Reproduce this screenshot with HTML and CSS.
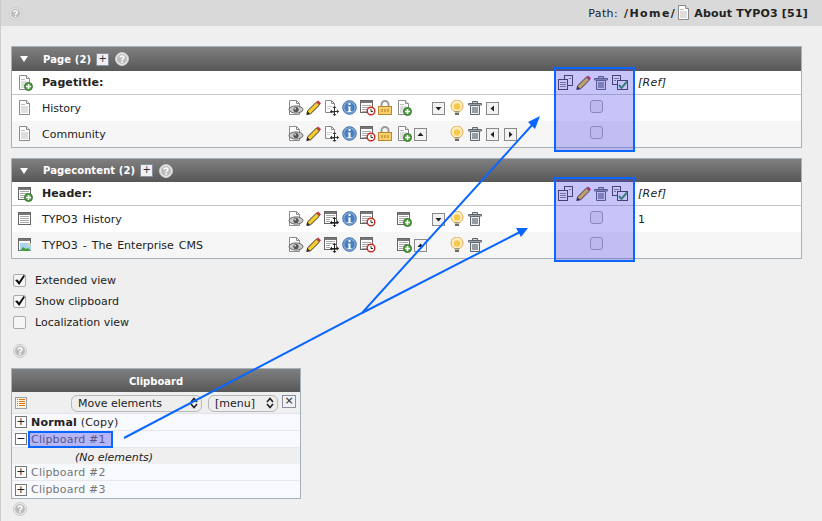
FILE: index.html
```html
<!DOCTYPE html>
<html lang="en">
<head>
    <meta charset="UTF-8">
    <meta name="viewport" content="width=device-width, initial-scale=1.0">
    <title>Web > List</title>
    <link rel="stylesheet" href="styles.css">
</head>
<body>
    <!-- icon sprites -->
    <svg class="sprites" aria-hidden="true">
        <symbol id="i-help" viewBox="0 0 14 14">
            <circle cx="7" cy="7" r="6.5" fill="#ececec" stroke="#c8c8c8"/>
            <circle cx="7" cy="7" r="5" fill="#bcbcbc"/>
            <path d="M5.2 5.6c0-2.3 3.7-2.3 3.7 0 0 1.3-1.9 1.3-1.9 2.8" fill="none" stroke="#fff" stroke-width="1.5"/>
            <rect x="6.2" y="9.2" width="1.6" height="1.6" fill="#fff"/>
        </symbol>
        <symbol id="i-doc" viewBox="0 0 16 16">
            <path d="M2.5 .5h7l3 3v11h-10z" fill="#fff" stroke="#8a8a8a"/>
            <path d="M9.5 .5v3h3" fill="#eee" stroke="#8a8a8a"/>
            <rect x="4" y="6" width="7" height="7" fill="#dedede"/>
            <path d="M4 4.5h4" stroke="#bbb"/>
        </symbol>
        <symbol id="i-plus" viewBox="0 0 16 16">
            <circle cx="11.5" cy="11.5" r="4" fill="#4c9a3e" stroke="#3a7d30"/>
            <path d="M11.5 9v5M9 11.5h5" stroke="#fff" stroke-width="1.6"/>
        </symbol>
        <symbol id="i-view" viewBox="0 0 16 16">
            <path d="M1.5 .5h7l3 3v11h-10z" fill="#fff" stroke="#8a8a8a"/>
            <path d="M8.5 .5v3h3" fill="none" stroke="#8a8a8a"/>
            <ellipse cx="8" cy="9.5" rx="7" ry="3.6" fill="#c9c9c9" stroke="#666"/>
            <circle cx="8" cy="9.5" r="2.6" fill="#555"/>
            <circle cx="7.2" cy="8.6" r=".9" fill="#ddd"/>
        </symbol>
        <symbol id="i-pencil" viewBox="0 0 16 16">
            <path d="M.8 14.5l.9-3.8L10.5 2l3 3-8.8 8.7z" fill="#f5cc2e" stroke="#222" stroke-width=".9"/>
            <path d="M10.5 2l1.7-1.6 2.8 2.8L13.5 5z" fill="#d0304a"/>
            <path d="M.8 14.5l.8-3 2.3 2.2z" fill="#222"/>
        </symbol>
        <symbol id="i-move" viewBox="0 0 16 16">
            <path d="M1.5 .5h6l3 3v9h-9z" fill="#fff" stroke="#8a8a8a"/>
            <path d="M7.5 .5v3h3" fill="none" stroke="#8a8a8a"/>
            <path d="M3 6.5h5M3 8.5h3" stroke="#ccc"/>
            <path d="M10.5 7v8M6.5 11.5h8" stroke="#333"/>
            <path d="M10.5 6l-2 2h4zM10.5 16l-2-2h4zM6 11.5l2-2v4zM15 11.5l-2-2v4z" fill="#333"/>
        </symbol>
        <symbol id="i-info" viewBox="0 0 16 16">
            <circle cx="7.5" cy="7.5" r="6.8" fill="#82a9d8" stroke="#3f6ea8"/>
            <circle cx="7.5" cy="7.5" r="5" fill="#4a7fbe"/>
            <rect x="6.5" y="3" width="2" height="2" fill="#fff"/>
            <path d="M6 6.5h2.5V11h1v1h-4v-1h1V7.5H6z" fill="#fff"/>
        </symbol>
        <symbol id="i-time" viewBox="0 0 16 16">
            <rect x=".5" y=".5" width="12" height="12" fill="#fff" stroke="#666"/>
            <rect x="1" y="1" width="11" height="2" fill="#777"/>
            <path d="M2 5.5h9M2 7.5h9M2 9.5h5M2 11.5h5" stroke="#aaa"/>
            <circle cx="11" cy="11" r="3.8" fill="#fff" stroke="#c8281e" stroke-width="1.4"/>
            <path d="M11 9v2.5h2" fill="none" stroke="#333"/>
        </symbol>
        <symbol id="i-lock" viewBox="0 0 16 16">
            <path d="M3.5 7V4.5a3.5 3.5 0 0 1 7 0V7" fill="none" stroke="#9a9a9a" stroke-width="2"/>
            <rect x=".5" y="6.5" width="13" height="8" fill="#f6d070" stroke="#b98a2c"/>
            <path d="M3 9h2v3H3zM6 9h2v3H6zM9 9h2v3H9z" fill="#d9a23f"/>
        </symbol>
        <symbol id="i-bulb" viewBox="0 0 16 16">
            <circle cx="7" cy="6" r="6" fill="#fdeec4" stroke="#e8a84a"/>
            <circle cx="7" cy="6.5" r="3.2" fill="#f8c848"/>
            <path d="M4.5 11h5v1.5h-5z" fill="#9a9a70"/>
            <path d="M5 13h4v2H5z" fill="#6a6a6a"/>
        </symbol>
        <symbol id="i-trash" viewBox="0 0 16 16">
            <path d="M.5 3.5h13V5H.5zM4.5 3.5v-2h5v2" fill="#d0d4d8" stroke="#5f6670"/>
            <path d="M2.5 5.5h9v9h-9z" fill="#eceef0" stroke="#5f6670"/>
            <path d="M5 7v6M7 7v6M9 7v6" stroke="#5f6670" stroke-width="1.2"/>
        </symbol>
        <symbol id="i-btn-down" viewBox="0 0 16 16">
            <rect x=".5" y="2.5" width="12" height="12" fill="#f2f2f2" stroke="#8a8a8a"/>
            <path d="M3.5 7h6l-3 3.5z" fill="#222"/>
        </symbol>
        <symbol id="i-btn-up" viewBox="0 0 16 16">
            <rect x=".5" y="2.5" width="12" height="12" fill="#f2f2f2" stroke="#8a8a8a"/>
            <path d="M3.5 10h6l-3-3.5z" fill="#222"/>
        </symbol>
        <symbol id="i-btn-left" viewBox="0 0 16 16">
            <rect x=".5" y="2.5" width="12" height="12" fill="#f2f2f2" stroke="#8a8a8a"/>
            <path d="M8 5.5v6l-3.5-3z" fill="#222"/>
        </symbol>
        <symbol id="i-btn-right" viewBox="0 0 16 16">
            <rect x=".5" y="2.5" width="12" height="12" fill="#f2f2f2" stroke="#8a8a8a"/>
            <path d="M5 5.5v6l3.5-3z" fill="#222"/>
        </symbol>
        <symbol id="i-table" viewBox="0 0 16 16">
            <rect x="1.5" y="1.5" width="12" height="12" fill="#fff" stroke="#666"/>
            <rect x="2" y="2" width="11" height="2" fill="#777"/>
            <path d="M3 5.5h9M3 7.5h9M3 9.5h9M3 11.5h9" stroke="#aaa"/>
        </symbol>
        <symbol id="i-table-move" viewBox="0 0 16 16">
            <rect x=".5" y=".5" width="12" height="12" fill="#fff" stroke="#666"/>
            <rect x="1" y="1" width="11" height="2" fill="#777"/>
            <path d="M2 4.5h9M2 6.5h9M2 8.5h4M2 10.5h4" stroke="#aaa"/>
            <path d="M10.5 7v8M6.5 11.5h8" stroke="#222"/>
            <path d="M10.5 6l-2 2h4zM10.5 16l-2-2h4zM6 11.5l2-2v4zM15 11.5l-2-2v4z" fill="#222"/>
        </symbol>
        <symbol id="i-image" viewBox="0 0 16 16">
            <rect x="1.5" y="1.5" width="12" height="12" fill="#fff" stroke="#666"/>
            <rect x="2" y="2" width="11" height="2" fill="#777"/>
            <rect x="3" y="6" width="11" height="8" fill="#a8d4ef"/>
            <path d="M3 14l3-4 3 2 2-1 3 3z" fill="#4c9a3e"/>
            <circle cx="12" cy="7.5" r="1.3" fill="#f6d860"/>
        </symbol>
        <symbol id="i-copy" viewBox="0 0 16 16">
            <rect x="6.5" y=".5" width="8" height="10" fill="#fff" stroke="#444"/>
            <rect x=".5" y="4.5" width="9" height="10" fill="#fff" stroke="#444"/>
            <path d="M2 7.5h6M2 9.500h6M2 11.500h6M11 3.500h2" stroke="#888"/>
        </symbol>
        <symbol id="i-copy-check" viewBox="0 0 16 16">
            <rect x=".5" y=".5" width="8" height="9" fill="#fff" stroke="#444"/>
            <rect x="5.5" y="5.5" width="10" height="9" fill="#fff" stroke="#444"/>
            <path d="M2 3.5h5M2 5.5h2" stroke="#888"/>
            <path d="M7 10l2.5 3L15 6.5" fill="none" stroke="#3a9a50" stroke-width="2"/>
        </symbol>
    </svg>

    <div class="topbar">
        <svg class="help help-top"><use href="#i-help"/></svg>
        <div class="path">
            <span class="path-label">Path:</span>
            <b class="path-home">/Home/</b>
            <svg class="icon"><use href="#i-doc"/></svg>
            <b class="path-page">About TYPO3 [51]</b>
        </div>
    </div>

    <div class="content">
        <div class="panel">
            <div class="panel-head panel-head-tall">
                <span class="tri"></span>
                <b class="panel-title">Page (2)</b>
                <span class="plus-btn">+</span>
                <svg class="help help-head"><use href="#i-help"/></svg>
            </div>
            <div class="row row-head">
                <span class="cell-icon"><svg class="icon"><use href="#i-doc"/><use href="#i-plus"/></svg></span>
                <b class="cell-title">Pagetitle:</b>
                <span class="cell-actions"></span>
                <span class="cell-clip">
                    <svg class="icon"><use href="#i-copy"/></svg>
                    <svg class="icon"><use href="#i-pencil"/></svg>
                    <svg class="icon"><use href="#i-trash"/></svg>
                    <svg class="icon"><use href="#i-copy-check"/></svg>
                </span>
                <i class="cell-ref">[Ref]</i>
            </div>
            <div class="row">
                <span class="cell-icon"><svg class="icon"><use href="#i-doc"/></svg></span>
                <span class="cell-title">History</span>
                <span class="cell-actions">
                    <svg class="icon"><use href="#i-view"/></svg>
                    <svg class="icon"><use href="#i-pencil"/></svg>
                    <svg class="icon"><use href="#i-move"/></svg>
                    <svg class="icon"><use href="#i-info"/></svg>
                    <svg class="icon"><use href="#i-time"/></svg>
                    <svg class="icon"><use href="#i-lock"/></svg>
                    <svg class="icon"><use href="#i-doc"/><use href="#i-plus"/></svg>
                    <span class="slot"></span>
                    <svg class="icon"><use href="#i-btn-down"/></svg>
                    <svg class="icon"><use href="#i-bulb"/></svg>
                    <svg class="icon"><use href="#i-trash"/></svg>
                    <svg class="icon"><use href="#i-btn-left"/></svg>
                </span>
                <span class="cell-clip cell-check"><input type="checkbox" class="clip-box"></span>
            </div>
            <div class="row row-alt">
                <span class="cell-icon"><svg class="icon"><use href="#i-doc"/></svg></span>
                <span class="cell-title">Community</span>
                <span class="cell-actions">
                    <svg class="icon"><use href="#i-view"/></svg>
                    <svg class="icon"><use href="#i-pencil"/></svg>
                    <svg class="icon"><use href="#i-move"/></svg>
                    <svg class="icon"><use href="#i-info"/></svg>
                    <svg class="icon"><use href="#i-time"/></svg>
                    <svg class="icon"><use href="#i-lock"/></svg>
                    <svg class="icon"><use href="#i-doc"/><use href="#i-plus"/></svg>
                    <svg class="icon"><use href="#i-btn-up"/></svg>
                    <span class="slot"></span>
                    <svg class="icon"><use href="#i-bulb"/></svg>
                    <svg class="icon"><use href="#i-trash"/></svg>
                    <svg class="icon"><use href="#i-btn-left"/></svg>
                    <svg class="icon"><use href="#i-btn-right"/></svg>
                </span>
                <span class="cell-clip cell-check"><input type="checkbox" class="clip-box"></span>
            </div>
        </div>

        <div class="panel">
            <div class="panel-head">
                <span class="tri"></span>
                <b class="panel-title">Pagecontent (2)</b>
                <span class="plus-btn">+</span>
                <svg class="help help-head"><use href="#i-help"/></svg>
            </div>
            <div class="row row-head">
                <span class="cell-icon"><svg class="icon"><use href="#i-table"/><use href="#i-plus"/></svg></span>
                <b class="cell-title">Header:</b>
                <span class="cell-actions"></span>
                <span class="cell-clip">
                    <svg class="icon"><use href="#i-copy"/></svg>
                    <svg class="icon"><use href="#i-pencil"/></svg>
                    <svg class="icon"><use href="#i-trash"/></svg>
                    <svg class="icon"><use href="#i-copy-check"/></svg>
                </span>
                <i class="cell-ref">[Ref]</i>
            </div>
            <div class="row">
                <span class="cell-icon"><svg class="icon"><use href="#i-table"/></svg></span>
                <span class="cell-title">TYPO3 History</span>
                <span class="cell-actions">
                    <svg class="icon"><use href="#i-view"/></svg>
                    <svg class="icon"><use href="#i-pencil"/></svg>
                    <svg class="icon"><use href="#i-table-move"/></svg>
                    <svg class="icon"><use href="#i-info"/></svg>
                    <svg class="icon"><use href="#i-time"/></svg>
                    <span class="slot"></span>
                    <svg class="icon"><use href="#i-table"/><use href="#i-plus"/></svg>
                    <span class="slot"></span>
                    <svg class="icon"><use href="#i-btn-down"/></svg>
                    <svg class="icon"><use href="#i-bulb"/></svg>
                    <svg class="icon"><use href="#i-trash"/></svg>
                </span>
                <span class="cell-clip cell-check"><input type="checkbox" class="clip-box"></span>
                <span class="cell-ref">1</span>
            </div>
            <div class="row row-alt">
                <span class="cell-icon"><svg class="icon"><use href="#i-image"/></svg></span>
                <span class="cell-title">TYPO3 - The Enterprise CMS</span>
                <span class="cell-actions">
                    <svg class="icon"><use href="#i-view"/></svg>
                    <svg class="icon"><use href="#i-pencil"/></svg>
                    <svg class="icon"><use href="#i-table-move"/></svg>
                    <svg class="icon"><use href="#i-info"/></svg>
                    <svg class="icon"><use href="#i-time"/></svg>
                    <span class="slot"></span>
                    <svg class="icon"><use href="#i-table"/><use href="#i-plus"/></svg>
                    <svg class="icon"><use href="#i-btn-up"/></svg>
                    <span class="slot"></span>
                    <svg class="icon"><use href="#i-bulb"/></svg>
                    <svg class="icon"><use href="#i-trash"/></svg>
                </span>
                <span class="cell-clip cell-check"><input type="checkbox" class="clip-box"></span>
            </div>
        </div>

        <div class="options">
            <label class="option"><input type="checkbox" class="option-box" checked>Extended view</label>
            <label class="option"><input type="checkbox" class="option-box" checked>Show clipboard</label>
            <label class="option"><input type="checkbox" class="option-box">Localization view</label>
        </div>
        <svg class="help help-block"><use href="#i-help"/></svg>

        <div class="clipboard">
            <div class="clip-head">Clipboard</div>
            <div class="clip-tools">
                <svg class="list-icon" viewBox="0 0 12 12">
                    <rect x=".5" y=".5" width="11" height="11" fill="#fdf8e8" stroke="#9aa0a8"/>
                    <path d="M2 2.5h1M4 2.5h6M2 4.5h1M4 4.5h6M2 6.5h1M4 6.5h6M2 8.5h1M4 8.5h6" stroke="#e8700a" stroke-width="1.2"/>
                </svg>
                <span class="select select-mode">Move elements<svg class="select-arrows" viewBox="0 0 8 12"><path d="M1 5l3-3.5L7 5M1 7l3 3.5L7 7" fill="none" stroke="#222" stroke-width="1.6"/></svg></span>
                <span class="select select-menu">[menu]<svg class="select-arrows" viewBox="0 0 8 12"><path d="M1 5l3-3.5L7 5M1 7l3 3.5L7 7" fill="none" stroke="#222" stroke-width="1.6"/></svg></span>
                <span class="clip-close">×</span>
            </div>
            <div class="clip-row"><span class="tree-btn">+</span><span><b>Normal</b> (Copy)</span></div>
            <div class="clip-row clip-row-muted"><span class="tree-btn">−</span><span class="clip-current">Clipboard #1</span></div>
            <div class="clip-empty">(No elements)</div>
            <div class="clip-row clip-row-muted"><span class="tree-btn">+</span><span>Clipboard #2</span></div>
            <div class="clip-row clip-row-muted clip-row-last"><span class="tree-btn">+</span><span>Clipboard #3</span></div>
        </div>
        <svg class="help help-foot"><use href="#i-help"/></svg>
    </div>

    <!-- annotations drawn over the screenshot -->
    <div class="mark mark-page"></div>
    <div class="mark mark-content"></div>
    <svg class="arrows" viewBox="0 0 822 521">
        <path d="M124 438L362 313L533 124M362 313L520 232" fill="none" stroke="#0a66ff" stroke-width="2"/>
        <path d="M540 116L528 122L535 129zM528 228L516 228L521 237z" fill="#0a66ff"/>
    </svg>
</body>
</html>
```

FILE: styles.css
```css
html, body {
    margin: 0;
    height: 100%;
}
body {
    font-family: "DejaVu Sans", Verdana, sans-serif;
    font-size: 11px;
    color: #222;
    background-color: #efefef;
    border-left: 1px solid #ccc;
    box-sizing: border-box;
    position: relative;
    overflow: hidden;
}
.sprites {
    position: absolute;
    width: 0;
    height: 0;
}
.icon {
    width: 16px;
    height: 16px;
    flex: none;
}
.help {
    width: 14px;
    height: 14px;
    flex: none;
}
.help-top {
    width: 13px;
    height: 13px;
}

/* top bar */
.topbar {
    height: 26px;
    background-color: #d9d9d9;
    display: flex;
    align-items: center;
    justify-content: space-between;
    padding: 0 14px 0 8px;
}
.path {
    display: flex;
    align-items: center;
}
.path-label {
    letter-spacing: .4px;
}
.path-home {
    margin-left: 6px;
    letter-spacing: 1.4px;
}
.path-page {
    margin-left: 2px;
    letter-spacing: .2px;
}

/* panels */
.content {
    padding: 20px 20px 0 10px;
}
.panel {
    border: 1px solid #a8b0b8;
    margin-bottom: 10px;
    background-color: #fff;
}
.panel-head {
    height: 23px;
    background: linear-gradient(#808080, #575757);
    color: #fff;
    display: flex;
    align-items: center;
}
.panel-head-tall {
    height: 24px;
}
.tri {
    width: 0;
    height: 0;
    margin-left: 8px;
    border-left: 4px solid transparent;
    border-right: 4px solid transparent;
    border-top: 6px solid #fff;
}
.panel-title {
    margin-left: 15px;
    font-size: 10px;
    letter-spacing: .1px;
}
.plus-btn {
    width: 11px;
    height: 11px;
    margin-left: 5px;
    border: 1px solid #8a8fa0;
    background-color: #eef0f6;
    color: #333;
    font-size: 10px;
    line-height: 10px;
    text-align: center;
}
.help-head {
    margin-left: 6px;
}
.row {
    display: flex;
    align-items: center;
    height: 26px;
    background-color: #fff;
}
.row-head {
    height: 23px;
    border-bottom: 1px solid #c8c8c8;
}
.row-alt {
    background-color: #f6f6f6;
}
.cell-icon {
    display: flex;
    width: 25px;
    margin-left: 5px;
}
.cell-title {
    width: 246px;
    word-spacing: 1.5px;
}
.cell-actions {
    display: flex;
    gap: 2px;
    width: 270px;
}
.slot {
    width: 16px;
}
.cell-clip {
    display: flex;
    gap: 2px;
    width: 80px;
}
.cell-check {
    padding-left: 32px;
    width: 48px;
}
.cell-ref {
    letter-spacing: .3px;
}
.clip-box {
    appearance: none;
    width: 13px;
    height: 13px;
    margin: 0 0 4px;
    background-color: #f0f0f0;
    border: 1px solid #aaa;
    border-radius: 3px;
}
.row-head b {
    letter-spacing: .1px;
}

/* view options */
.options {
    margin: 11px 0 0 2px;
}
.option {
    display: flex;
    align-items: center;
    height: 21px;
}
.option-box {
    appearance: none;
    position: relative;
    width: 13px;
    height: 13px;
    margin: 0 9px 0 0;
    background-color: #f6f6f6;
    border: 1px solid #aaa;
    border-radius: 2px;
}
.option-box:checked::after {
    content: "";
    position: absolute;
    left: 1px;
    top: 0;
    width: 10px;
    height: 10px;
    background-color: #111;
    clip-path: polygon(0 50%, 25% 45%, 40% 65%, 85% 0, 100% 10%, 42% 100%);
}
.help-block {
    display: block;
    margin: 11px 0 10px 2px;
}

/* clipboard */
.clipboard {
    width: 288px;
    border: 1px solid #a8b0b8;
    background-color: #f8f9fc;
}
.clip-head {
    height: 23px;
    line-height: 25px;
    background: linear-gradient(#808080, #575757);
    color: #fff;
    font-size: 10px;
    font-weight: bold;
    text-align: center;
}
.clip-tools {
    display: flex;
    align-items: center;
    height: 20px;
    padding-top: 1px;
    background-color: #efefef;
    border-bottom: 1px solid #e2e4ea;
}
.list-icon {
    width: 12px;
    height: 12px;
    margin-left: 3px;
}
.select {
    display: flex;
    align-items: center;
    justify-content: space-between;
    box-sizing: border-box;
    height: 17px;
    padding: 0 3px 0 6px;
    border: 1px solid #b8b8b8;
    border-radius: 6px;
    background-color: #eee;
}
.select-mode {
    width: 131px;
    margin-left: 44px;
}
.select-menu {
    width: 70px;
    margin-left: 6px;
}
.select-arrows {
    width: 8px;
    height: 12px;
}
.clip-close {
    width: 12px;
    height: 11px;
    margin: -4px 0 0 4px;
    border: 1px solid #8a8fa0;
    background-color: #eef0f6;
    font-size: 11px;
    line-height: 10px;
    text-align: center;
}
.clip-row {
    display: flex;
    align-items: center;
    height: 16px;
    padding-left: 3px;
    border-bottom: 1px solid #e6e8ee;
    letter-spacing: .2px;
}
.clip-row-last {
    height: 17px;
    border-bottom: 0;
}
.clip-row-muted {
    color: #777;
}
.tree-btn {
    width: 10px;
    height: 10px;
    margin-right: 4px;
    border: 1px solid #777;
    background-color: #fff;
    color: #222;
    line-height: 9px;
    text-align: center;
}
.clip-current {
    box-sizing: border-box;
    height: 17px;
    line-height: 13px;
    margin-left: -3px;
    padding: 0 5px 0 1px;
    border: 2px solid #0a66ff;
    background-color: #b6b6f6;
    color: #55558a;
}
.clip-empty {
    height: 16px;
    line-height: 20px;
    padding-left: 63px;
    background-color: #efefef;
    font-style: italic;
}
.help-foot {
    display: block;
    margin: 3px 0 0 2px;
}

/* annotations */
.mark {
    position: absolute;
    left: 553px;
    width: 77px;
    height: 81px;
    border: 2px solid #0a66ff;
    background-color: rgba(70, 60, 240, 0.3);
}
.mark-page {
    top: 67px;
}
.mark-content {
    top: 177px;
}
.arrows {
    position: absolute;
    left: -1px;
    top: 0;
    width: 822px;
    height: 521px;
    pointer-events: none;
}
```
